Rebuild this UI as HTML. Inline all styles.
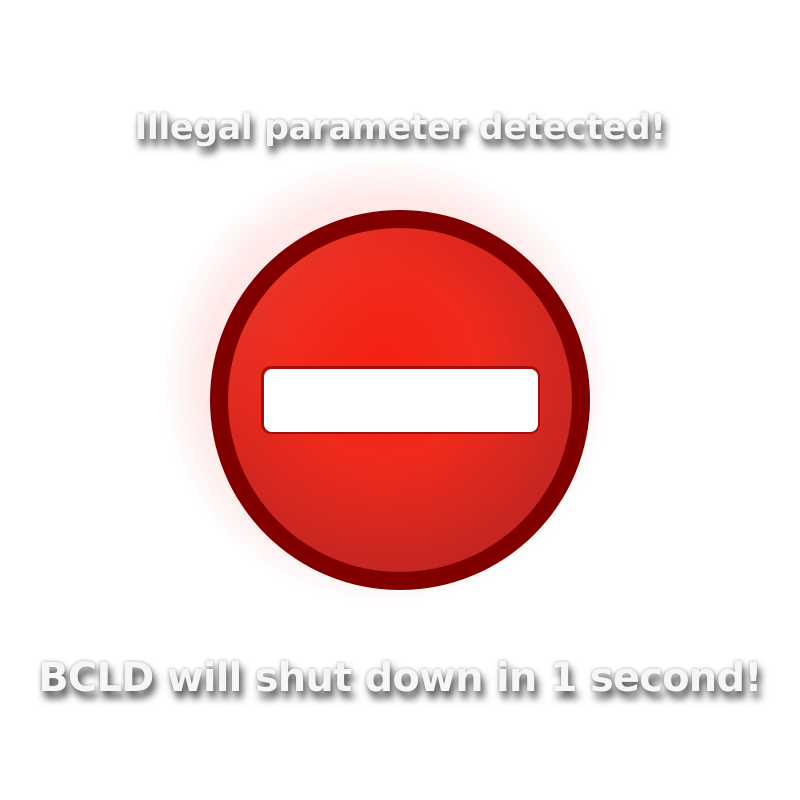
<!DOCTYPE html>
<html><head><style>
html,body{margin:0;width:800px;height:800px;background:#fff;overflow:hidden}
.t{position:absolute;left:0;width:800px;text-align:center;color:#f6f6f6;font-family:"DejaVu Sans","Liberation Sans",sans-serif;font-weight:bold;text-shadow:3px 7px 8px #444,0 0 3px #aaa;white-space:nowrap}
</style></head><body>
<div class="t" style="top:108px;font-size:35px;letter-spacing:-0.5px">Illegal parameter detected!</div>
<svg width="800" height="800" style="position:absolute;left:0;top:0">
<defs>
<radialGradient id="g" cx="0.45" cy="0.4" r="0.7">
<stop offset="0" stop-color="#f52010"/><stop offset="0.4" stop-color="#ef2a1c"/><stop offset="1" stop-color="#b82424"/></radialGradient>
<radialGradient id="h" cx="0.5" cy="0.5" r="0.5">
<stop offset="0.8" stop-color="#f44" stop-opacity="0.12"/><stop offset="1" stop-color="#f44" stop-opacity="0"/></radialGradient>
<linearGradient id="l" x1="0" y1="0" x2="1" y2="1"><stop offset="0" stop-color="#f65a4a" stop-opacity="0.6"/><stop offset="0.4" stop-color="#f52010" stop-opacity="0"/></linearGradient>
</defs>
<circle cx="385" cy="380" r="225" fill="url(#h)"/>
<circle cx="400" cy="400" r="190" fill="#800000"/>
<circle cx="400" cy="400" r="172" fill="url(#g)"/>
<circle cx="400" cy="400" r="172" fill="url(#l)"/>
<rect x="261" y="366" width="279" height="68" rx="10" fill="#a01010"/>
<rect x="264" y="369" width="274" height="63" rx="8" fill="#fff"/>
</svg>
<div class="t" style="top:655px;font-size:40px;letter-spacing:-0.8px">BCLD will shut down in 1 second!</div>
</body></html>
